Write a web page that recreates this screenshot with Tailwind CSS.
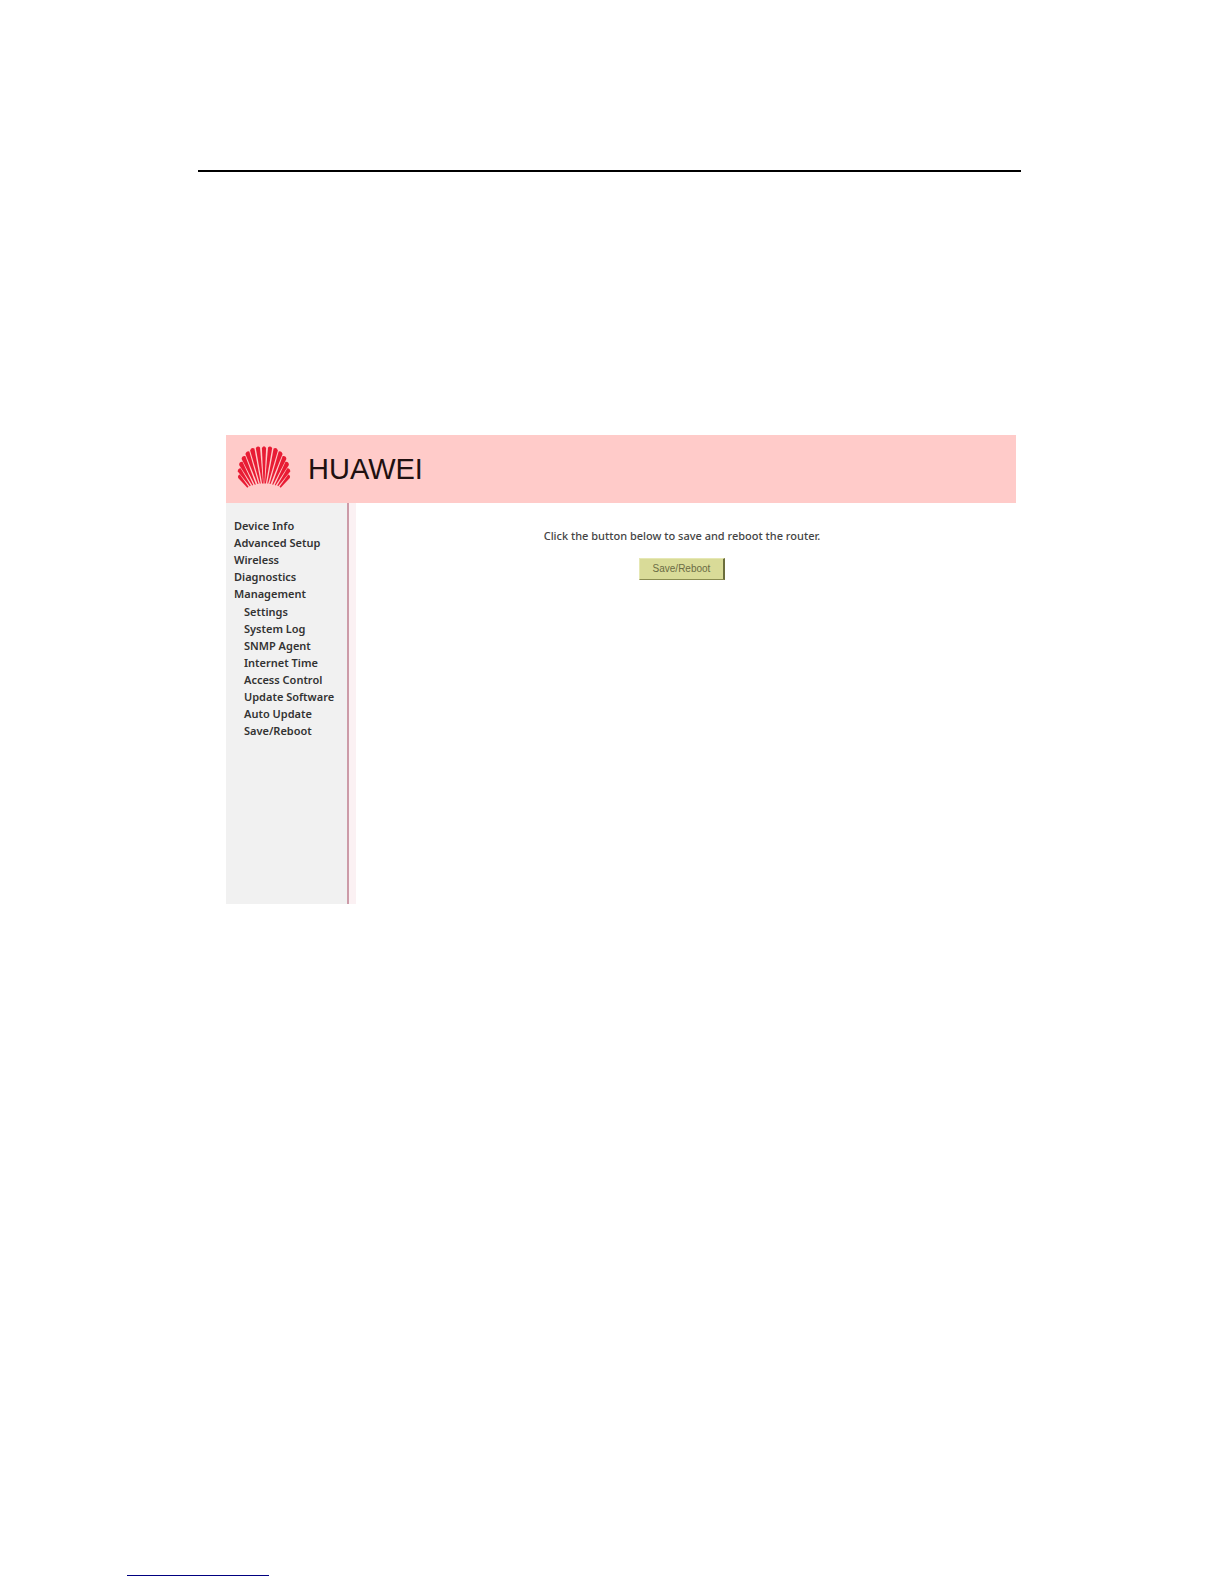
<!DOCTYPE html>
<html lang="en">
<head>
  <meta charset="utf-8" />
  <title>HUAWEI - Save/Reboot</title>
  <meta name="viewport" content="width=device-width, initial-scale=1" />
  <script src="https://cdn.jsdelivr.net/npm/@tailwindcss/browser@4"></script>
</head>
<body class="bg-white min-h-screen flex flex-col font-['Noto_Sans',sans-serif] text-[#333]">
  <hr class="mt-[170px] ml-[198px] mr-[203px] border-t-2 border-black" />

  <div class="mt-[263px] ml-[226px] mr-[208px]">
    <header class="flex items-center h-[68px] pl-[11px] gap-[17px] bg-[#ffcbc9]">
      <svg class="w-[54px] h-[42px] -mt-1" viewBox="0 0 53 42" aria-hidden="true">
        <g id="half" fill="#e81c34">
          <path d="M18.300 2Q20.500 -.5 22.500 1.500L25.600 37.500L24.600 37.500Z"/>
          <path d="M12.600 4.500Q13.800 1 16.900 2.500L23.300 37.500L22.300 37.500Z"/>
          <path d="M7.900 8Q8.800 4.500 11.800 5.500L21 38L20 38Z"/>
          <path d="M4.100 13Q4.300 9.500 7.800 10L18.300 38.500L17.300 38.700Z"/>
          <path d="M1.600 19Q1.700 15.500 5 15.800L15.700 39L14.900 39.500Z"/>
          <path d="M.3 25.500Q0 22.500 3.200 22.200L13.200 39.500L12.300 40.300Z"/>
          <path d="M.7 32Q-.3 29.500 2.300 28.500L11 40.700L9.800 41.800Z"/>
        </g>
        <use href="#half" transform="matrix(-1 0 0 1 53 0)"/>
        <path fill="#e81c34" d="M24.400 2Q26.500 -1.500 28.600 2L27 37.500L26 37.500Z"/>
      </svg>
      <h1 class="text-[29px] leading-8 text-[#201010] font-['Liberation_Sans',sans-serif]">HUAWEI</h1>
    </header>

    <div class="flex min-h-[401px]">
      <nav class="w-[121px] shrink-0 pt-[14px] pl-2 bg-[#f1f1f1] text-[11px] leading-[17px] font-semibold whitespace-nowrap">
        <ul>
          <li><a href="#">Device Info</a></li>
          <li><a href="#">Advanced Setup</a></li>
          <li><a href="#">Wireless</a></li>
          <li><a href="#">Diagnostics</a></li>
          <li>
            <a href="#">Management</a>
            <ul class="pt-px pl-[10px]">
              <li><a href="#">Settings</a></li>
              <li><a href="#">System Log</a></li>
              <li><a href="#">SNMP Agent</a></li>
              <li><a href="#">Internet Time</a></li>
              <li><a href="#">Access Control</a></li>
              <li><a href="#">Update Software</a></li>
              <li><a href="#">Auto Update</a></li>
              <li><a href="#">Save/Reboot</a></li>
            </ul>
          </li>
        </ul>
      </nav>
      <div class="w-[9px] shrink-0 border-l-2 border-[#cc9ba8] bg-[#fbf1f3]"></div>
      <main class="flex-1 pt-6 pr-2 text-center">
        <p class="text-[11px] leading-[17px] font-medium text-[#444]">Click the button below to save and reboot the router.</p>
        <button type="button" class="mt-[14px] w-[86px] h-[22px] bg-[#d9db98] border border-r-2 border-t-[#e6e8b4] border-l-[#e6e8b4] border-r-[#6b6d3c] border-b-[#8a8c50] text-[10px] leading-4 text-[#6b6b45] font-['Liberation_Sans',sans-serif]">Save/Reboot</button>
      </main>
    </div>
  </div>

  <hr class="mt-auto mb-2 ml-[127px] w-[142px] border-[#000080]" />
</body>
</html>
